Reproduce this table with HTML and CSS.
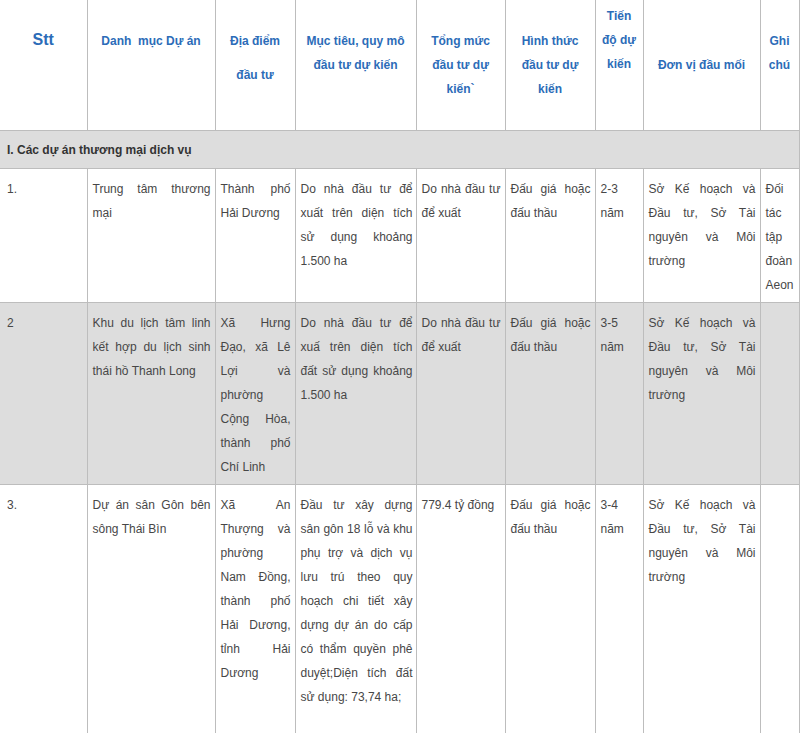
FILE: index.html
```html
<!DOCTYPE html>
<html lang="vi">
<head>
<meta charset="utf-8">
<title>Danh mục dự án</title>
<link rel="stylesheet" href="styles.css">
</head>
<body>
<table class="projects">
  <colgroup>
    <col class="c1"><col class="c2"><col class="c3"><col class="c4"><col class="c5"><col class="c6"><col class="c7"><col class="c8"><col class="c9">
  </colgroup>
  <thead>
    <tr class="head">
      <th class="stt">Stt</th>
      <th class="pt-b">Danh&nbsp; mục Dự án</th>
      <th class="pt-b">Địa điểm<span class="gap">đầu tư</span></th>
      <th class="pt-b">Mục tiêu, quy mô<br>đầu tư dự kiến</th>
      <th class="pt-b">Tổng mức<br>đầu tư dự<br>kiến`</th>
      <th class="pt-b">Hình thức<br>đầu tư dự<br>kiến</th>
      <th class="pt-a">Tiến<br>độ dự<br>kiến</th>
      <th class="pt-c">Đơn vị đầu mối</th>
      <th class="pt-b">Ghi<br>chú</th>
    </tr>
  </thead>
  <tbody>
    <tr class="section">
      <td colspan="9">I. Các dự án thương mại dịch vụ</td>
    </tr>
    <tr>
      <td>1.</td>
      <td>Trung tâm thương mại</td>
      <td>Thành phố Hải Dương</td>
      <td class="wide">Do nhà đầu tư để xuất trên diện tích sử&nbsp;dụng khoảng 1.500 ha</td>
      <td>Do nhà đầu tư để xuất</td>
      <td>Đấu giá hoặc đấu thầu</td>
      <td>2-3 năm</td>
      <td>Sở Kế hoạch và Đầu tư, Sở Tài nguyên và Môi trường</td>
      <td class="note">Đối tác tập đoàn Aeon</td>
    </tr>
    <tr class="alt">
      <td>2</td>
      <td>Khu du lịch tâm linh kết hợp du lịch sinh thái hồ Thanh Long</td>
      <td>Xã Hưng Đạo, xã Lê Lợi và phường Cộng Hòa, thành phố Chí Linh</td>
      <td class="wide">Do nhà đầu tư để xuấ trên diện tích đất&nbsp;sử dụng khoảng 1.500 ha</td>
      <td>Do nhà đầu tư để xuất</td>
      <td>Đấu giá hoặc đấu thầu</td>
      <td>3-5 năm</td>
      <td>Sở Kế hoạch và Đầu tư, Sở Tài nguyên và Môi trường</td>
      <td class="note"></td>
    </tr>
    <tr class="last">
      <td>3.</td>
      <td>Dự án sân Gôn bên sông Thái Bìn</td>
      <td>Xã An Thượng và phường Nam Đồng, thành phố Hải Dương, tỉnh Hải Dương</td>
      <td class="wide">Đầu tư xây dựng sân&nbsp;gôn 18 lỗ và khu phụ trợ và dịch vụ lưu trú theo quy hoạch chi tiết xây dựng dự án do cấp có thẩm quyền phê duyệt;Diện tích đất sử dụng: 73,74 ha;</td>
      <td>779.4 tỷ đồng</td>
      <td>Đấu giá hoặc đấu thầu</td>
      <td>3-4 năm</td>
      <td>Sở Kế hoạch và Đầu tư, Sở Tài nguyên và Môi trường</td>
      <td class="note"></td>
    </tr>
  </tbody>
</table>
</body>
</html>
```

FILE: styles.css
```css
html, body {
  margin: 0;
  padding: 0;
  overflow: hidden;
  background: #ffffff;
}

body {
  font-family: "Liberation Sans", Arial, sans-serif;
  font-size: 12px;
  color: #474747;
}

.projects {
  border-collapse: collapse;
  table-layout: fixed;
  width: 799px;
}

.c1 { width: 87px; }
.c2 { width: 128px; }
.c3 { width: 80px; }
.c4 { width: 121px; }
.c5 { width: 89px; }
.c6 { width: 90px; }
.c7 { width: 48px; }
.c8 { width: 117px; }
.c9 { width: 39px; }

.projects th,
.projects td {
  border: 1px solid #bdbdbd;
  line-height: 24px;
  vertical-align: top;
}

.projects tr > :first-child {
  border-left: 0;
}

.projects thead th {
  border-top: 0;
}

/* header */
.head {
  height: 130px;
}

.head th {
  color: #2c6cb8;
  font-weight: bold;
  font-size: 12px;
  text-align: center;
  padding: 0 3px;
}

.head .stt {
  font-size: 16px;
  padding-top: 28px;
}

.head .pt-a { padding-top: 4px; }
.head .pt-b { padding-top: 29px; }
.head .pt-c { padding-top: 53px; }

.gap {
  display: block;
  margin-top: 10px;
}

/* body */
.projects td {
  padding: 8px 4px 5px 5px;
  text-align: justify;
}

.projects td:first-child {
  padding-left: 7px;
}

.projects td.wide {
  padding-right: 3px;
}

.projects td.note {
  padding-right: 2px;
}

.section td {
  background: #dddddd;
  color: #333333;
  font-weight: bold;
  padding: 7px 6px 6px 10px;
  text-align: left;
}

.alt td {
  background: #dddddd;
}

.last td {
  padding-bottom: 40px;
}
```
